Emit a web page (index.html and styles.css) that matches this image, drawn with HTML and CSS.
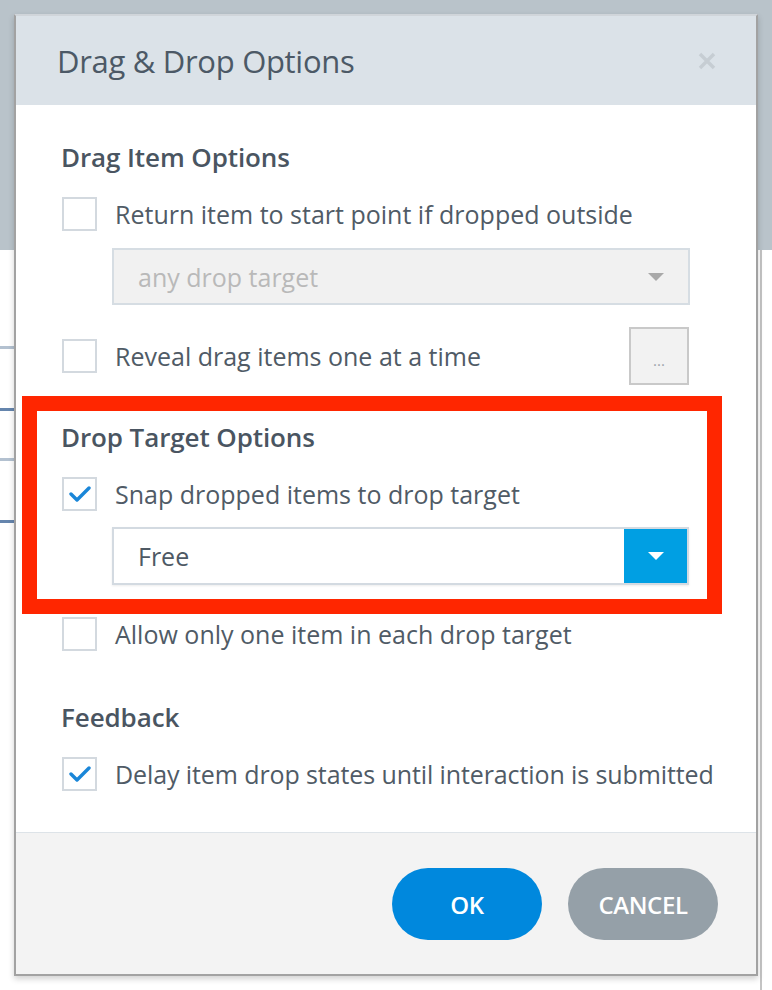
FILE: index.html
```html
<!DOCTYPE html>
<html>
<head>
<meta charset="utf-8">
<link rel="stylesheet" href="styles.css">
</head>
<body>
<div class="backdrop">
  <div class="band"></div>
  <div class="lower">
    <div class="strip">
      <div class="sline s1"></div>
      <div class="sline s2 dark"></div>
      <div class="sline s3"></div>
      <div class="sline s4 dark"></div>
    </div>
    <div class="rstrip"></div>
  </div>
</div>

<div class="dialog">
  <div class="header">
    <h1 class="title">Drag &amp; Drop Options</h1>
    <svg class="close" width="20" height="20" viewBox="0 0 20 20"><path d="M3 3L17 17M17 3L3 17" stroke="#c6cdd3" stroke-width="3.5" fill="none"/></svg>
  </div>
  <div class="body">
    <h2 class="heading">Drag Item Options</h2>
    <div class="row r1">
      <span class="cb"></span>
      <span class="label">Return item to start point if dropped outside</span>
    </div>
    <div class="select disabled">
      <span class="sel-text">any drop target</span>
      <span class="arrow grey"></span>
    </div>
    <div class="row r2">
      <span class="cb"></span>
      <span class="label grow">Reveal drag items one at a time</span>
      <span class="dots">...</span>
    </div>

    <div class="highlight">
      <h2 class="heading">Drop Target Options</h2>
      <div class="row r1">
        <span class="cb checked"><svg width="22" height="16" viewBox="0 0 22 16"><path d="M2 8L8 14L20 2" stroke="#1a86d8" stroke-width="3.4" fill="none" stroke-linecap="round" stroke-linejoin="round"/></svg></span>
        <span class="label">Snap dropped items to drop target</span>
      </div>
      <div class="select active">
        <span class="sel-text">Free</span>
        <span class="sel-btn"><span class="arrow white"></span></span>
      </div>
    </div>

    <div class="row r3">
      <span class="cb"></span>
      <span class="label">Allow only one item in each drop target</span>
    </div>

    <h2 class="heading fb">Feedback</h2>
    <div class="row r1">
      <span class="cb checked"><svg width="22" height="16" viewBox="0 0 22 16"><path d="M2 8L8 14L20 2" stroke="#1a86d8" stroke-width="3.4" fill="none" stroke-linecap="round" stroke-linejoin="round"/></svg></span>
      <span class="label tight">Delay item drop states until interaction is submitted</span>
    </div>
  </div>
  <div class="footer">
    <button class="btn ok">OK</button>
    <button class="btn cancel">CANCEL</button>
  </div>
</div>
</body>
</html>
```

FILE: styles.css
```css
* { box-sizing: border-box; }
html, body { margin: 0; padding: 0; }
body {
  width: 772px;
  height: 990px;
  overflow: hidden;
  background: #ffffff;
  font-family: "Open Sans", "Noto Sans", sans-serif;
  color: #4f5a65;
  position: relative;
}

/* backdrop */
.backdrop { width: 772px; height: 990px; display: flex; flex-direction: column; }
.band { height: 250px; background: #b9c3ca; flex: none; }
.lower { flex: 1; display: flex; justify-content: space-between; }
.strip { width: 14px; padding-top: 96px; }
.sline { height: 3px; background: #b3c1d0; }
.sline.dark { background: #6585ad; }
.s2 { margin-top: 59px; }
.s3 { margin-top: 47px; }
.s4 { margin-top: 59px; }
.rstrip { width: 12px; border-left: 2px solid #c4c4c4; }

/* dialog */
.dialog {
  position: absolute;
  left: 14px;
  top: 14px;
  width: 744px;
  height: 962px;
  background: #fff;
  border: 2px solid #a2a2a2;
  border-top-color: #d0d5da;
  box-shadow: 0 3px 6px rgba(0,0,0,0.18);
  display: flex;
  flex-direction: column;
}
.header {
  height: 89px;
  background: #dbe2e8;
  display: flex;
  align-items: center;
  justify-content: space-between;
  padding: 0 39px 0 41px;
  flex: none;
}
.title {
  margin: 0;
  font-weight: 400;
  font-size: 31px;
  color: #4c5966;
  letter-spacing: -0.3px;
}
.body {
  padding: 35px 66px 41px 45px;
  flex: none;
}
.heading {
  margin: 0;
  height: 34px;
  line-height: 34px;
  font-size: 26px;
  font-weight: 600;
  color: #4a5561;
  letter-spacing: -0.1px;
}
.heading.fb { margin-top: 49px; }
.row {
  display: flex;
  align-items: center;
  gap: 18px;
  padding-left: 1px;
}
.row.r1 { margin-top: 23px; }
.row.r2 { margin-top: 22px; height: 58px; padding-right: 1px; }
.row.r3 { margin-top: 3px; }
.label {
  font-size: 25px;
  line-height: 34px;
  color: #505b66;
  white-space: nowrap;
}
.label.tight { letter-spacing: -0.1px; }
.grow { flex: 1; }
.cb {
  width: 35px;
  height: 34px;
  border: 2px solid #d3d9df;
  background: #fff;
  flex: none;
  display: flex;
  align-items: center;
  justify-content: center;
}
.cb svg { display: block; }

.select {
  margin-top: 17px;
  margin-left: 51px;
  height: 57px;
  display: flex;
  align-items: center;
  border: 2px solid #d6dde3;
}
.select.disabled {
  background: #f1f1f1;
  padding: 0 24px 0 24px;
  justify-content: space-between;
  width: 578px;
}
.select.disabled .sel-text { color: #b9b9b9; font-size: 25px; }
.select.active {
  width: 577px;
  background: #fff;
  margin-top: 16px;
  height: 58px;
  border-color: #d3dae1;
  box-shadow: 0 1px 2px rgba(0,0,0,0.08);
}
.select.active .sel-text { flex: 1; padding-left: 24px; font-size: 25px; color: #4e5964; }
.sel-btn {
  width: 63px;
  align-self: stretch;
  background: #009fe3;
  display: flex;
  align-items: center;
  justify-content: center;
}
.arrow {
  width: 0; height: 0;
  border-left: 8px solid transparent;
  border-right: 8px solid transparent;
  border-top: 8px solid #a9a9a9;
}
.arrow.white { border-top-color: #fff; }

.dots {
  width: 60px;
  height: 58px;
  border: 2px solid #c9c9c9;
  background: #f2f2f2;
  color: #9ca4ab;
  font-size: 15px;
  display: flex;
  align-items: center;
  justify-content: center;
  padding-top: 8px;
  flex: none;
}

.highlight {
  margin: 11px -32px 0 -39px;
  border: 15px solid #ff2600;
  padding: 9px 17px 14px 24px;
}

.footer {
  flex: 1;
  background: #f3f3f3;
  border-top: 1px solid #dde3e8;
  display: flex;
  justify-content: flex-end;
  align-items: flex-start;
  gap: 26px;
  padding: 35px 38px 0 0;
}
.btn {
  width: 150px;
  height: 72px;
  border: none;
  border-radius: 36px;
  color: #fff;
  font-family: "Open Sans", "Noto Sans", sans-serif;
  font-size: 24px;
  font-weight: 600;
  letter-spacing: -0.4px;
}
.btn.ok { background: #0088dd; }
.btn.cancel { background: #95a0a8; }
```
